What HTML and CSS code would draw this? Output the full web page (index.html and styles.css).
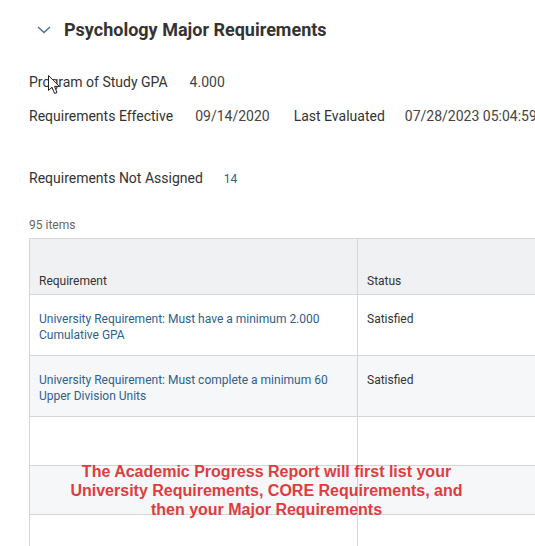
FILE: index.html
```html
<!DOCTYPE html>
<html>
<head>
<meta charset="utf-8">
<link rel="stylesheet" href="styles.css">
</head>
<body>
<div class="page">
  <div class="title-row">
    <svg class="chevron" width="14" height="8" viewBox="0 0 14 8"><path d="M1 1 L7 6.5 L13 1" fill="none" stroke="#4b6e9b" stroke-width="1.4"/></svg>
    <h1 class="title">Psychology Major Requirements</h1>
  </div>
  <div class="fields">
    <div class="field-row">
      <span class="label">Program of Study GPA</span>
      <span class="value v-gpa">4.000</span>
    </div>
    <div class="field-row">
      <span class="label">Requirements Effective</span>
      <span class="value v-eff">09/14/2020</span>
      <span class="label l-last">Last Evaluated</span>
      <span class="value v-last">07/28/2023 05:04:59 PM</span>
    </div>
  </div>
  <div class="not-assigned">
    <span class="label">Requirements Not Assigned</span>
    <span class="count">14</span>
  </div>
  <div class="items">95 items</div>
  <div class="table">
    <div class="row head">
      <div class="cell c1">Requirement</div>
      <div class="cell c2">Status</div>
    </div>
    <div class="row tall">
      <div class="cell c1 link">University Requirement: Must have a minimum 2.000 Cumulative GPA</div>
      <div class="cell c2">Satisfied</div>
    </div>
    <div class="row tall alt">
      <div class="cell c1 link">University Requirement: Must complete a minimum 60 Upper Division Units</div>
      <div class="cell c2">Satisfied</div>
    </div>
    <div class="row short">
      <div class="cell c1"></div>
      <div class="cell c2"></div>
    </div>
    <div class="row short alt">
      <div class="cell c1"></div>
      <div class="cell c2"></div>
    </div>
    <div class="row short">
      <div class="cell c1"></div>
      <div class="cell c2"></div>
    </div>
  </div>
  <div class="note">The Academic Progress Report will first list your<br>University Requirements, CORE Requirements, and<br>then your Major Requirements</div>
  <svg class="cursor" width="13" height="20" viewBox="0 0 13 20"><path d="M0.5 0.5 L0.5 15.5 L4 12.2 L6.6 18.5 L9 17.5 L6.5 11.4 L11.3 11.4 Z" fill="#fff" stroke="#222" stroke-width="1"/></svg>
</div>
</body>
</html>
```
FILE: styles.css
```css
html, body {
  margin: 0;
  padding: 0;
  background: #fff;
  overflow: hidden;
}
.page {
  position: relative;
  width: 535px;
  height: 546px;
  overflow: hidden;
  font-family: Roboto, "Liberation Sans", sans-serif;
  color: #333;
}
.title-row {
  display: flex;
  align-items: center;
  padding: 19px 0 0 37px;
  height: 22px;
}
.chevron {
  display: block;
  margin-right: 13px;
  margin-top: -1px;
}
.title {
  margin: 0;
  font-size: 18px;
  font-weight: 700;
  color: #333;
  line-height: 22px;
}
.fields {
  padding: 33px 0 0 29px;
  display: flex;
  flex-direction: column;
  gap: 17px;
}
.field-row {
  display: flex;
  white-space: nowrap;
  font-size: 14px;
  line-height: 17px;
}
.label {
  color: #333;
  font-size: 14px;
}
.value {
  color: #444;
}
.v-gpa { margin-left: 22px; }
.v-eff { margin-left: 22px; }
.l-last { margin-left: 24px; }
.v-last { margin-left: 20px; }
.not-assigned {
  padding: 45px 0 0 29px;
  display: flex;
  align-items: baseline;
  white-space: nowrap;
  line-height: 17px;
}
.count {
  margin-left: 21px;
  font-size: 12px;
  color: #2d5f91;
}
.items {
  padding: 30px 0 0 29px;
  font-size: 12px;
  color: #666;
  line-height: 14px;
}
.table {
  margin: 6px 0 0 29px;
  width: 560px;
  border-left: 1px solid #d6d6d6;
  border-top: 1px solid #d6d6d6;
}
.row {
  display: flex;
  border-bottom: 1px solid #d6d6d6;
  box-sizing: border-box;
}
.row.alt { background: #f6f7f8; }
.row.head {
  height: 56px;
  background: #f0f1f2;
  font-size: 12px;
}
.row.tall { height: 61px; }
.row.short { height: 49px; }
.cell {
  box-sizing: border-box;
  font-size: 12px;
  line-height: 16px;
}
.c1 {
  width: 328px;
  padding: 16px 10px 0 9px;
  border-right: 1px solid #d6d6d6;
}
.c2 {
  flex: 1;
  padding: 16px 10px 0 9px;
}
.row.head .cell {
  padding-top: 34px;
  color: #333;
}
.link { color: #2d5f91; }
.note {
  position: absolute;
  left: 1px;
  width: 531px;
  top: 462px;
  text-align: center;
  font-family: "Liberation Sans", Arial, sans-serif;
  font-weight: 700;
  font-size: 16px;
  line-height: 19px;
  color: #e03c40;
}
.cursor {
  position: absolute;
  left: 48px;
  top: 75px;
}
```
